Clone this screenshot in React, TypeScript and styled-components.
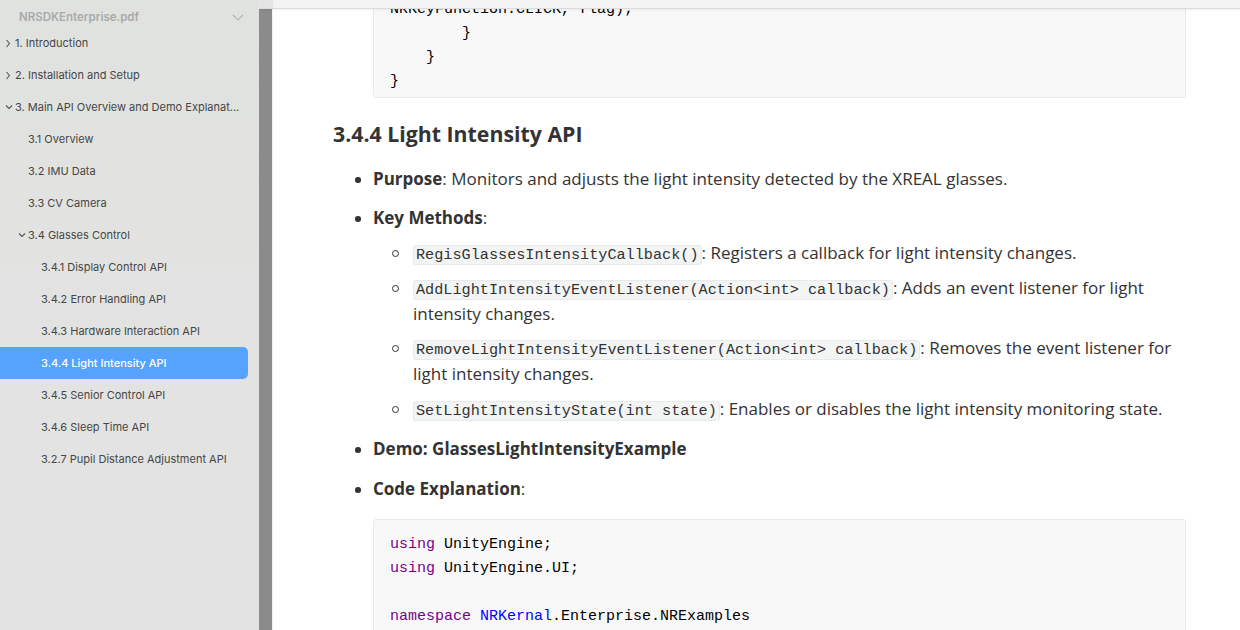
import React from "react";
import styled, { createGlobalStyle } from "styled-components";

const Global = createGlobalStyle`
  html, body { margin: 0; padding: 0; overflow: hidden; background: #fff; }
  #root { height: 630px; }
`;

const Shell = styled.div`
  display: flex;
  width: 1240px;
  height: 630px;
  overflow: hidden;
`;

const Sidebar = styled.aside`
  width: 259px;
  flex: none;
  height: 630px;
  background: linear-gradient(180deg, #dfe2df 0%, #e2e3e1 30%, #e3e3e3 100%);
  font-family: Inter, "Liberation Sans", sans-serif;
  font-size: 11px;
  color: #464646;
  display: flex;
  flex-direction: column;
`;

const SideHeader = styled.div`
  height: 27px;
  padding: 7px 15px 0 19px;
  display: flex;
  align-items: center;
  justify-content: space-between;
  color: #a8aaa9;
  font-size: 11.5px;
  font-weight: 600;
  box-sizing: border-box;
`;

const Row = styled.div<{ $level: number; $active?: boolean }>`
  height: 32px;
  display: flex;
  align-items: center;
  padding-left: ${(p) => 5 + p.$level * 13}px;
  margin-right: 11px;
  border-radius: 0 5px 5px 0;
  background: ${(p) => (p.$active ? "#55a3fe" : "transparent")};
  color: ${(p) => (p.$active ? "#fff" : "#464646")};
  font-weight: ${(p) => (p.$active ? 500 : 400)};
  white-space: nowrap;
`;

const Caret = styled.span`
  width: 10px;
  flex: none;
  display: flex;
  align-items: center;
`;

const RightPane = styled.div`
  flex: 1;
  display: flex;
  position: relative;
  overflow: hidden;
`;

const Strip = styled.div`
  width: 14px;
  box-sizing: border-box;
  flex: none;
  background: #8b8b8b;
  border-right: 1px solid #f0f0f0;
`;

const Main = styled.main`
  flex: 1;
  overflow: hidden;
  background: #fff;
`;

const TopBar = styled.div`
  position: absolute;
  top: 0;
  left: 0;
  right: 0;
  height: 8px;
  background: #f3f3f3;
  border-bottom: 1px solid #dcdcdc;
  box-shadow: 0 1px 2px rgba(0, 0, 0, 0.06);
  z-index: 2;
`;

const TopBarEdge = styled.div`
  width: 14px;
  height: 100%;
  background: #e4e4e4;
`;

const Doc = styled.article`
  margin-top: -16px;
  padding-left: 60px;
  width: 853px;
  font-family: "Open Sans", sans-serif;
  font-size: 17px;
  line-height: 26px;
  color: #333;
`;

const CodeBlock = styled.pre`
  margin: 0 0 0 40px;
  padding: 13px 16px 3px;
  background: #f8f8f8;
  border: 1px solid #e7eaed;
  border-radius: 3px;
  font-family: "Liberation Mono", monospace;
  font-size: 15px;
  line-height: 24px;
  color: #000;
`;

const Kw = styled.span`
  color: #770088;
`;
const Def = styled.span`
  color: #0000ff;
`;

const Heading = styled.h3`
  margin: 21px 0 0;
  font-size: 21.3px;
  line-height: 30px;
  font-weight: 700;
  color: #333;
`;

const List = styled.ul<{ $nested?: boolean }>`
  margin: ${(p) => (p.$nested ? "9px 0 0" : "17px 0 0")};
  padding-left: 40px;
  list-style: none;
`;

const Item = styled.li<{ $gap: number; $nested?: boolean }>`
  position: relative;
  margin-top: ${(p) => p.$gap}px;
  &:first-child { margin-top: 0; }
  &::before {
    content: "";
    position: absolute;
    box-sizing: border-box;
    left: ${(p) => (p.$nested ? -21 : -18)}px;
    top: ${(p) => (p.$nested ? 10 : 11)}px;
    width: ${(p) => (p.$nested ? 7 : 5.5)}px;
    height: ${(p) => (p.$nested ? 7 : 5.5)}px;
    border-radius: 50%;
    background: ${(p) => (p.$nested ? "transparent" : "#333")};
    border: ${(p) => (p.$nested ? "1.3px solid #333" : "none")};
  }
`;

const Spacer = styled.div`
  height: 17px;
`;

const Code = styled.code`
  font-family: "Liberation Mono", monospace;
  font-size: 15.2px;
  line-height: 17px;
  background: #f3f4f4;
  border: 1px solid #e7eaed;
  border-radius: 3px;
  padding: 0 2px;
`;

const Chevron = ({ down, color = "#555" }: { down?: boolean; color?: string }) =>
  down ? (
    <svg width="8" height="6" viewBox="0 0 8 6">
      <polyline points="1,1.5 4,4.5 7,1.5" fill="none" stroke={color} strokeWidth="1.1" />
    </svg>
  ) : (
    <svg width="6" height="9" viewBox="0 0 6 9">
      <polyline points="1.5,1 4.5,4.5 1.5,8" fill="none" stroke={color} strokeWidth="1.1" />
    </svg>
  );

type Entry = { label: string; level: number; caret?: "right" | "down"; active?: boolean };

const entries: Entry[] = [
  { label: "1. Introduction", level: 0, caret: "right" },
  { label: "2. Installation and Setup", level: 0, caret: "right" },
  { label: "3. Main API Overview and Demo Explanat...", level: 0, caret: "down" },
  { label: "3.1 Overview", level: 1 },
  { label: "3.2 IMU Data", level: 1 },
  { label: "3.3 CV Camera", level: 1 },
  { label: "3.4 Glasses Control", level: 1, caret: "down" },
  { label: "3.4.1 Display Control API", level: 2 },
  { label: "3.4.2 Error Handling API", level: 2 },
  { label: "3.4.3 Hardware Interaction API", level: 2 },
  { label: "3.4.4 Light Intensity API", level: 2, active: true },
  { label: "3.4.5 Senior Control API", level: 2 },
  { label: "3.4.6 Sleep Time API", level: 2 },
  { label: "3.2.7 Pupil Distance Adjustment API", level: 2 },
];

export default function App() {
  return (
    <Shell>
      <Global />
      <Sidebar>
        <SideHeader>
          <span>NRSDKEnterprise.pdf</span>
          <svg width="12" height="7" viewBox="0 0 12 7">
            <polyline points="1,1 6,6 11,1" fill="none" stroke="#b3b5b4" strokeWidth="1.2" />
          </svg>
        </SideHeader>
        {entries.map((e) => (
          <Row key={e.label} $level={e.level} $active={e.active}>
            <Caret>{e.caret && <Chevron down={e.caret === "down"} />}</Caret>
            {e.label}
          </Row>
        ))}
      </Sidebar>
      <RightPane>
        <TopBar>
          <TopBarEdge />
        </TopBar>
        <Strip />
        <Main>
          <Doc>
            <CodeBlock>
              {"NRKeyFunction.CLICK, flag);\n        }\n    }\n}"}
            </CodeBlock>
            <Heading>3.4.4 Light Intensity API</Heading>
            <List>
              <Item $gap={0}>
                <strong>Purpose</strong>: Monitors and adjusts the light intensity detected by the XREAL glasses.
              </Item>
              <Item $gap={13}>
                <strong>Key Methods</strong>:
                <List $nested>
                  <Item $nested $gap={0}>
                    <Code>RegisGlassesIntensityCallback()</Code>: Registers a callback for light intensity changes.
                  </Item>
                  <Item $nested $gap={9}>
                    <Code>AddLightIntensityEventListener(Action&lt;int&gt; callback)</Code>: Adds an event listener for light intensity changes.
                  </Item>
                  <Item $nested $gap={8}>
                    <Code>RemoveLightIntensityEventListener(Action&lt;int&gt; callback)</Code>: Removes the event listener for light intensity changes.
                  </Item>
                  <Item $nested $gap={9}>
                    <Code>SetLightIntensityState(int state)</Code>: Enables or disables the light intensity monitoring state.
                  </Item>
                </List>
              </Item>
              <Item $gap={14}>
                <strong>Demo: GlassesLightIntensityExample</strong>
              </Item>
              <Item $gap={14}>
                <strong>Code Explanation</strong>:
              </Item>
            </List>
            <Spacer />
            <CodeBlock>
              <Kw>using</Kw>{" UnityEngine;\n"}
              <Kw>using</Kw>{" UnityEngine.UI;\n\n"}
              <Kw>namespace</Kw> <Def>NRKernal</Def>{".Enterprise.NRExamples\n{"}
            </CodeBlock>
          </Doc>
        </Main>
      </RightPane>
    </Shell>
  );
}
